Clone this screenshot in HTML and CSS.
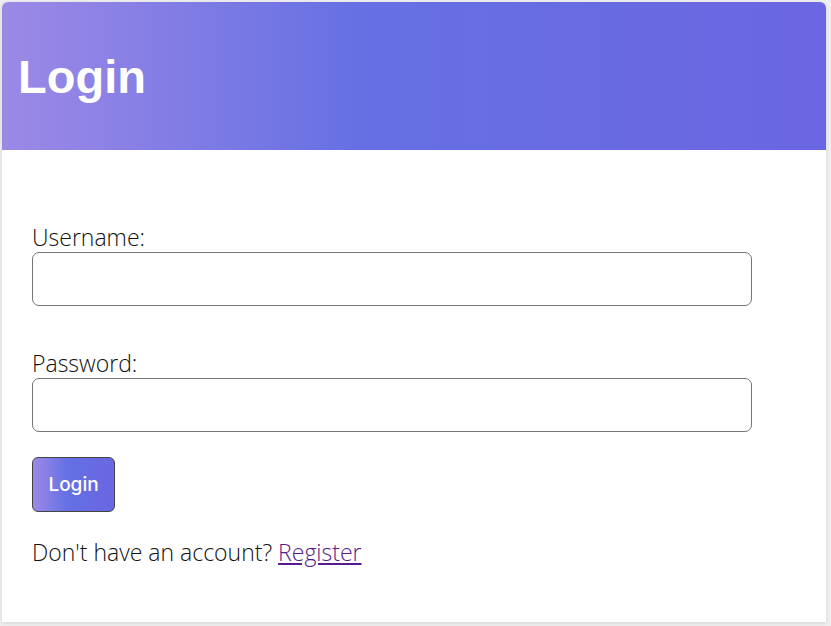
FILE: index.html
```html
<!DOCTYPE html>
<html lang="en">
<head>
<meta charset="utf-8">
<title>Login</title>
<link rel="stylesheet" href="styles.css">
</head>
<body>
<div class="card">
  <header class="card-header">
    <h1 class="title">Login</h1>
  </header>
  <div class="card-body">
    <form class="form">
      <div class="field">
        <label class="label" for="username">Username:</label>
        <input class="input" id="username" type="text">
      </div>
      <div class="field">
        <label class="label" for="password">Password:</label>
        <input class="input" id="password" type="password">
      </div>
      <button class="btn" type="button">Login</button>
    </form>
    <p class="note">Don't have an account? <a class="link" href="#">Register</a></p>
  </div>
</div>
</body>
</html>
```
FILE: styles.css
```css
html, body {
  margin: 0;
  background: #efefef;
}
body {
  padding: 2px 5px 4px 2px;
  font-family: "Open Sans", "Noto Sans", sans-serif;
  font-weight: 300;
  color: #111;
}
.card {
  background: #fff;
  border-radius: 6px 6px 0 0;
  box-shadow: 0 1px 4px rgba(0, 0, 0, 0.12);
  height: 620px;
  box-sizing: border-box;
}
.card-header {
  height: 148px;
  display: flex;
  align-items: center;
  padding: 0 16px;
  border-radius: 6px 6px 0 0;
  background: linear-gradient(to right, #9c89e6 0%, #6670e3 43%, #6b66e2 100%);
}
.title {
  margin: 0;
  color: #fff;
  font-family: "Liberation Sans", Arial, sans-serif;
  font-weight: 700;
  font-size: 47px;
  line-height: 1;
}
.card-body {
  padding: 73px 30px 0 30px;
}
.form {
  width: 720px;
}
.field {
  display: flex;
  flex-direction: column;
  margin-bottom: 43px;
}
.field + .field {
  margin-bottom: 25px;
}
.label {
  font-size: 23px;
  line-height: 29px;
}
.input {
  height: 54px;
  box-sizing: border-box;
  border: 1px solid #767676;
  border-radius: 7px;
  margin: 0;
  font-size: 18px;
  padding: 0 10px;
}
.btn {
  width: 83px;
  height: 55px;
  border: 1px solid #444;
  border-radius: 6px;
  color: #fff;
  font-family: Inter, "Liberation Sans", sans-serif;
  font-weight: 500;
  font-size: 19px;
  background: linear-gradient(to right, #9c89e6 0%, #6470e4 43%, #6b66e2 100%);
  padding: 0;
}
.note {
  margin: 26px 0 0 0;
  font-size: 23px;
  line-height: 29px;
}
.link {
  color: #551a8b;
}
```
